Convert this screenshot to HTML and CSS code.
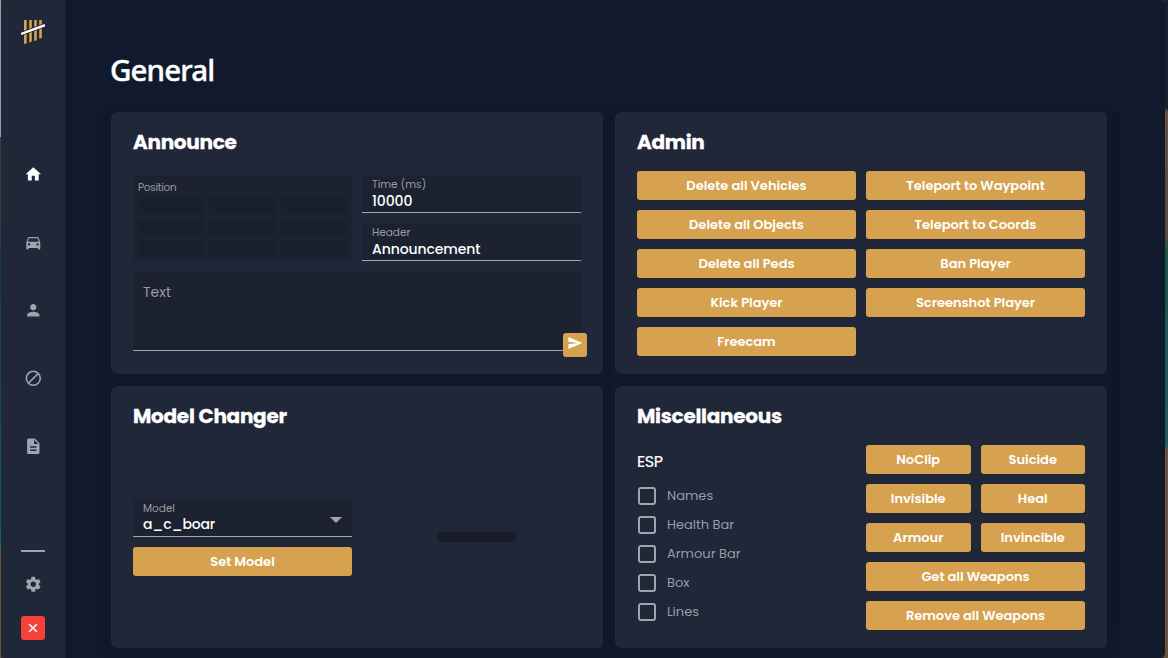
FILE: index.html
```html
<!DOCTYPE html>
<html lang="en">
<head>
<meta charset="utf-8">
<title>General</title>
<link rel="stylesheet" href="styles.css">
</head>
<body>
<div class="window">
  <nav class="sidebar">
    <svg class="logo" viewBox="0 0 24 24"><path fill="#d6a24f" d="M3 0h2.700v23.300L3 24zM8.200 0h2.600v21.600l-2.600.8zM13.200 0h2.600v20.200l-2.600.8zM18.200 0h2.600v18l-2.600.8z"/><path d="M0 14L24 5" stroke="#1f2739" stroke-width="4"/><path d="M0 14L24 5.200" stroke="#fff" stroke-width="2.300"/></svg>
    <div class="links">
      <svg class="icon active" viewBox="0 0 24 24"><path d="M10 20v-6h4v6h5v-8h3L12 3 2 12h3v8z"/></svg>
      <svg class="icon car" viewBox="0 0 24 24"><path d="M18.920 5.010C18.720 4.420 18.160 4 17.500 4h-11c-.66 0-1.210.42-1.420 1.010L3 11v8c0 .55.450 1 1 1h1c.55 0 1-.45 1-1v-1h12v1c0 .55.450 1 1 1h1c.55 0 1-.45 1-1v-8l-2.080-5.990zM6.500 15c-.83 0-1.500-.67-1.500-1.500S5.670 12 6.500 12s1.500.67 1.500 1.500S7.330 15 6.500 15zm11 0c-.83 0-1.500-.67-1.500-1.500s.67-1.500 1.500-1.500 1.500.67 1.500 1.500-.67 1.500-1.500 1.500zM5 10l1.500-4.500h11L19 10H5z"/></svg>
      <svg class="icon" viewBox="0 0 24 24"><path d="M12 12c2.210 0 4-1.790 4-4s-1.790-4-4-4-4 1.790-4 4 1.790 4 4 4zm0 2c-2.670 0-8 1.340-8 4v2h16v-2c0-2.660-5.330-4-8-4z"/></svg>
      <svg class="icon" viewBox="0 0 24 24"><g fill="none" stroke="currentColor" stroke-width="2"><circle cx="12" cy="12" r="9"/><path d="M5.600 18.400L18.400 5.600"/></g></svg>
      <svg class="icon" viewBox="0 0 24 24"><path d="M14 2H6c-1.100 0-1.990.9-1.990 2L4 20c0 1.100.89 2 1.990 2H18c1.100 0 2-.9 2-2V8l-6-6zm2 16H8v-2h8v2zm0-4H8v-2h8v2zm-3-5V3.500L18.500 9H13z"/></svg>
    </div>
    <div class="foot">
      <div class="line"></div>
      <svg class="icon" viewBox="0 0 24 24"><path d="M19.140 12.940c.04-.3.060-.61.060-.94 0-.32-.02-.64-.07-.94l2.030-1.580c.18-.14.230-.41.120-.61l-1.920-3.320c-.12-.22-.37-.29-.59-.22l-2.390.96c-.5-.38-1.030-.7-1.620-.94l-.36-2.540c-.04-.24-.24-.41-.48-.41h-3.840c-.24 0-.43.17-.47.41l-.36 2.540c-.59.240-1.130.57-1.620.94l-2.390-.96c-.22-.08-.47 0-.59.220L2.740 8.870c-.12.210-.08.470.120.610l2.030 1.580c-.05.300-.09.630-.09.940s.02.640.070.940l-2.030 1.580c-.18.140-.23.410-.12.610l1.920 3.320c.12.220.370.290.590.220l2.390-.96c.5.380 1.030.7 1.620.94l.36 2.540c.05.240.240.410.480.410h3.840c.24 0 .44-.17.470-.41l.36-2.540c.59-.24 1.130-.56 1.620-.94l2.390.96c.22.080.470 0 .59-.22l1.920-3.320c.12-.22.070-.47-.12-.61l-2.010-1.580zM12 15.600c-1.980 0-3.600-1.620-3.600-3.600s1.620-3.600 3.600-3.600 3.600 1.620 3.600 3.600-1.620 3.600-3.600 3.600z"/></svg>
      <div class="close"><svg viewBox="0 0 24 24"><path d="M19 6.410L17.590 5 12 10.590 6.410 5 5 6.410 10.590 12 5 17.590 6.410 19 12 13.410 17.590 19 19 17.590 13.410 12z"/></svg></div>
    </div>
  </nav>
  <main class="content">
    <h1>General</h1>
    <div class="scroll">
      <div class="cards">
        <section class="card">
          <h2>Announce</h2>
          <div class="announce">
            <div class="position"><span>Position</span>
              <div class="cells"><i></i><i></i><i></i><i></i><i></i><i></i><i></i><i></i><i></i></div>
            </div>
            <div class="fields">
              <div class="field"><label>Time (ms)</label><b>10000</b></div>
              <div class="field"><label>Header</label><b>Announcement</b></div>
            </div>
            <div class="textarea"><span>Text</span>
              <div class="send"><svg viewBox="0 0 24 24"><path d="M2.010 21L23 12 2.010 3 2 10l15 2-15 2z"/></svg></div>
            </div>
          </div>
        </section>
        <section class="card">
          <h2>Admin</h2>
          <div class="buttons admin">
            <button>Delete all Vehicles</button><button>Teleport to Waypoint</button>
            <button>Delete all Objects</button><button>Teleport to Coords</button>
            <button>Delete all Peds</button><button>Ban Player</button>
            <button>Kick Player</button><button>Screenshot Player</button>
            <button>Freecam</button>
          </div>
        </section>
        <section class="card">
          <h2>Model Changer</h2>
          <div class="model">
            <div class="picker">
              <div class="field select"><label>Model</label><b>a_c_boar</b><span class="arrow"></span></div>
              <button>Set Model</button>
            </div>
            <div class="preview"><div class="pill"></div></div>
          </div>
        </section>
        <section class="card">
          <h2>Miscellaneous</h2>
          <div class="misc">
            <div class="esp">
              <h3>ESP</h3>
              <label class="check"><i></i><span>Names</span></label>
              <label class="check"><i></i><span>Health Bar</span></label>
              <label class="check"><i></i><span>Armour Bar</span></label>
              <label class="check"><i></i><span>Box</span></label>
              <label class="check"><i></i><span>Lines</span></label>
            </div>
            <div class="buttons">
              <button>NoClip</button><button>Suicide</button>
              <button>Invisible</button><button>Heal</button>
              <button>Armour</button><button>Invincible</button>
              <button class="wide">Get all Weapons</button>
              <button class="wide">Remove all Weapons</button>
            </div>
          </div>
        </section>
      </div>
      <div class="scrollbar"></div>
    </div>
  </main>
</div>
</body>
</html>
```
FILE: styles.css
```css
* { box-sizing: border-box; }
body {
  margin: 0;
  width: 1168px;
  height: 658px;
  overflow: hidden;
  padding: 0 3px 0 1px;
  font-family: Poppins, Inter, sans-serif;
  color: #fff;
  background:
    linear-gradient(#9c9c9a 0 137px, #3e3d38 137px 220px, #123f43 260px, #1a5a55 530px, #14706a 548px, #66543c 549px) left / 1px 100% no-repeat,
    linear-gradient(#17212d 0 108px, #65523f 112px, #594a3b 235px, #205249 250px, #1b615b 445px, #6a543c 449px) right / 4px 100% no-repeat,
    #2c3138;
}
.window { display: flex; height: 658px; background: #111a2c; border-radius: 5px; overflow: hidden; }
.sidebar {
  width: 64px;
  display: flex;
  flex-direction: column;
  align-items: center;
  background: #1f2739;
  color: #a1a4ad;
  padding: 20px 0 18px;
}
.logo { width: 24px; height: 24px; }
.icon { width: 18.600px; height: 18.600px; fill: currentColor; display: block; }
.active { color: #fff; }
.car { transform: translateY(1px); }
.links { display: flex; flex-direction: column; gap: 49.400px; margin-top: 120.700px; }
.foot { margin-top: auto; display: flex; flex-direction: column; align-items: center; }
.line { width: 24px; height: 2px; background: #a1a4ad; margin-bottom: 22.700px; }
.close { width: 24px; height: 24px; margin-top: 22.700px; border-radius: 3px; background: #f44336; display: grid; place-items: center; }
.close svg { width: 14px; fill: #fff; stroke: #fff; stroke-width: .9; }
.content { flex: 1; padding: 47px 0 0 45px; }
h1 { margin: 0; height: 65px; font: 500 29.500px/45px "Noto Sans", sans-serif; letter-spacing: -.9px; -webkit-text-stroke: .4px #fff; }
.scroll { display: flex; gap: 5px; padding-left: 1px; }
.cards { display: grid; grid-template-columns: 492px 492px; grid-auto-rows: 262px; gap: 12px; }
.card { background: #1f2739; border-radius: 6px; padding: 15px 22px 0; box-shadow: 0 3px 8px rgba(15, 24, 37, .8); }
.scrollbar { width: 7px; height: 516px; border-radius: 4px; background: #0f1725; }
h2 { margin: 0; font-size: 20px; line-height: 30px; font-weight: 700; letter-spacing: -.28px; -webkit-text-stroke: .3px #fff; }
button {
  height: 29px; width: 100%; padding: 0; border: 0; border-radius: 3px;
  background: #d6a24f; color: #fff;
  font: 600 13px/29px Poppins, Inter, sans-serif;
}
.buttons { display: grid; grid-template-columns: 1fr 1fr; gap: 10px; align-content: start; }
.admin { margin-top: 14px; }
.wide { grid-column: span 2; }
.announce { display: grid; grid-template-columns: 219px 219px; grid-template-rows: 86px 80px; gap: 10px; margin-top: 18px; }
.position { background: #1c2230; border-radius: 4px; padding: 4px 5px 5px; color: #999ca5; }
.position span { display: block; font-size: 10.500px; line-height: 18px; height: 18px; letter-spacing: -.3px; }
.cells { display: grid; grid-template-columns: repeat(3, 1fr); grid-auto-rows: 16.500px; gap: 5px; }
.cells i { background: #1a1f2c; border-radius: 3px; }
.fields { display: grid; gap: 10px; }
.field { position: relative; height: 38px; background: #1c2230; border-bottom: 1px solid #a1a4ad; border-radius: 4px 4px 0 0; padding: 2px 10px 0; }
.field label { display: block; font-size: 10.500px; line-height: 15px; color: #999ca5; }
.field b { display: block; font-size: 14px; font-weight: 500; line-height: 18px; letter-spacing: -.1px; }
.select b { line-height: 16px; letter-spacing: -.2px; }
.textarea { position: relative; grid-column: span 2; background: #1c2230; border-bottom: 1px solid #a1a4ad; border-radius: 4px 4px 0 0; padding: 11px 10px; font-size: 14px; line-height: 20px; color: #999ca5; }
.send { position: absolute; right: -6px; bottom: -7px; width: 24px; height: 24px; border-radius: 3px; background: #d6a24f; display: flex; justify-content: center; padding-top: 2px; }
.send svg { width: 16px; height: 16px; fill: #fff; }
.model { display: grid; grid-template-columns: 219px 219px; gap: 10px; align-items: center; height: 212px; }
.picker { display: grid; gap: 10px; }
.arrow { position: absolute; right: 10px; top: 18px; border: 6px solid transparent; border-top-color: #a1a4ad; border-bottom: 0; }
.preview { display: grid; place-items: center; padding-left: 11px; }
.pill { width: 80px; height: 10px; border-radius: 5px; background: #181d27; }
.misc { display: grid; grid-template-columns: 219px 219px; gap: 10px; margin-top: 14px; }
h3 { margin: 7px 0 9px; font-size: 16px; line-height: 20px; font-weight: 400; letter-spacing: -.4px; -webkit-text-stroke: .2px #fff; }
.check { display: flex; align-items: center; gap: 11px; height: 29px; padding-left: 1px; font-size: 13px; color: #999ca5; }
.check i { width: 18px; height: 18px; border: 2px solid #a1a4ad; border-radius: 3px; }
```
